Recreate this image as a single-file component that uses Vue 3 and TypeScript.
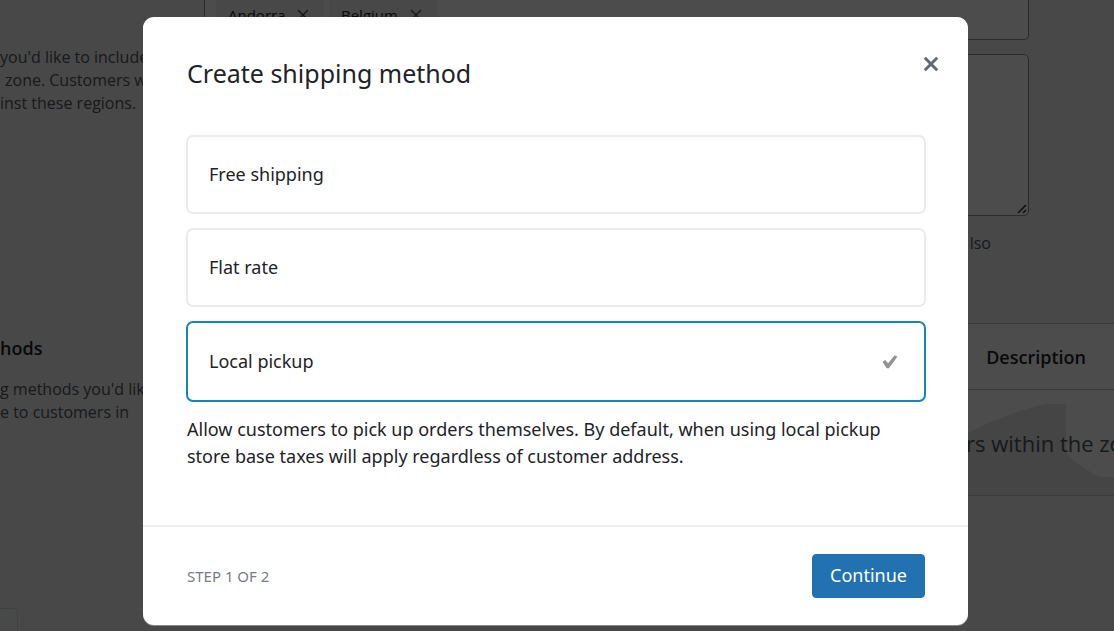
<script setup lang="ts">
import { ref, computed } from 'vue'

interface Method {
  id: string
  label: string
  description: string
}

const regions = ['Andorra', 'Belgium']

const methods: Method[] = [
  { id: 'free', label: 'Free shipping', description: '' },
  { id: 'flat', label: 'Flat rate', description: '' },
  {
    id: 'pickup',
    label: 'Local pickup',
    description:
      'Allow customers to pick up orders themselves. By default, when using local pickup store base taxes will apply regardless of customer address.',
  },
]

const selected = ref('pickup')
const description = computed(() => methods.find((m) => m.id === selected.value)?.description ?? '')
</script>

<template>
  <div class="screen">
    <main class="page" inert>
      <section class="row regions">
        <p class="help">
          you'd like to include<br />
          <span class="indent">zone. Customers will</span><br />
          inst these regions.
        </p>
        <div class="fields">
          <div class="picker">
            <span v-for="r in regions" :key="r" class="chip">
              {{ r }}
              <svg width="12" height="12" viewBox="0 0 12 12"><path d="M1 1l10 10M11 1L1 11" /></svg>
            </span>
          </div>
          <div class="codes">
            <textarea aria-label="Postcodes"></textarea>
            <svg class="grip" width="10" height="10" viewBox="0 0 10 10"><path d="M1 9L9 1M6 9L9 6" /></svg>
          </div>
          <p class="note">lso</p>
        </div>
      </section>

      <section class="row methods">
        <div>
          <h2>hods</h2>
          <p class="help">
            g methods you'd like<br />
            e to customers in
          </p>
        </div>
        <table>
          <thead>
            <tr><th scope="col">Description</th></tr>
          </thead>
          <tbody>
            <tr>
              <td>
                <svg class="art" width="146" height="105" viewBox="0 0 146 105">
                  <path d="M0 43Q46 20 78 14L98 14V58Q98 66 106 71L124 83Q129 87 135 87H146V105H0Z" />
                </svg>
                <span>rs within the zone</span>
              </td>
            </tr>
          </tbody>
        </table>
      </section>
      <button class="save" type="button" aria-label="Save"></button>
    </main>

    <div class="overlay">
      <form class="modal" role="dialog" aria-labelledby="title" @submit.prevent>
        <header>
          <h1 id="title">Create shipping method</h1>
          <button class="close" type="button" aria-label="Close">
            <svg width="16" height="16" viewBox="0 0 16 16"><path d="M1.8 1.8l12.4 12.4M14.2 1.8L1.8 14.2" /></svg>
          </button>
        </header>

        <div class="body">
          <div class="options">
            <label v-for="m in methods" :key="m.id" class="option" :class="{ active: selected === m.id }">
              <input v-model="selected" type="radio" name="method" :value="m.id" />
              <span>{{ m.label }}</span>
              <svg v-if="selected === m.id" width="16" height="14" viewBox="0 0 16 14">
                <path d="M.6 7L3.2 4.9 6.1 8.3 12.7.3 15.4 1.7 6.9 13.2H4.7Z" />
              </svg>
            </label>
          </div>
          <p class="description">{{ description }}</p>
        </div>

        <footer>
          <span class="step">STEP 1 OF 2</span>
          <button class="continue" type="submit">Continue</button>
        </footer>
      </form>
    </div>
  </div>
</template>

<style>
body {
  margin: 0;
  background: #f0f0f1;
}
</style>

<style scoped>
* {
  box-sizing: border-box;
}
h1,
h2,
p {
  margin: 0;
}
button,
textarea {
  font: inherit;
}
.screen {
  position: relative;
  height: 100vh;
  overflow: hidden;
  font-family: 'Open Sans', 'Noto Sans', sans-serif;
  color: #1d2327;
}
.page {
  height: 100%;
  background: #f0f0f1;
}
.row {
  display: grid;
  grid-template-columns: 204px 1fr;
}
.regions {
  height: 323px;
}
.help {
  font-size: 16px;
  line-height: 23px;
  color: #50575e;
  white-space: nowrap;
}
.regions .help {
  padding-top: 46px;
}
.indent {
  padding-left: 5px;
}
.fields {
  padding-right: 85px;
}
.picker {
  display: flex;
  gap: 5px;
  height: 40px;
  padding: 0 11px 10px;
  background: #fff;
  border: 1px solid #8c8f94;
  border-top: 0;
  border-radius: 0 0 5px 5px;
}
.chip {
  display: flex;
  align-items: center;
  justify-content: space-between;
  width: 108px;
  padding: 0 15px 0 12px;
  background: #f0f0f1;
  font-size: 15px;
}
.chip svg {
  fill: none;
  stroke: #50575e;
  stroke-width: 1.5;
}
.codes {
  position: relative;
  margin-top: 14px;
}
.codes textarea {
  display: block;
  width: 100%;
  height: 162px;
  background: #fff;
  border: 1px solid #8c8f94;
  border-radius: 5px;
  resize: none;
}
.grip {
  position: absolute;
  right: 2px;
  bottom: 2px;
  fill: none;
  stroke: #1d2327;
  stroke-width: 1.4;
}
.note {
  margin-top: 16px;
  padding-right: 38px;
  font-size: 16px;
  line-height: 23px;
  color: #50575e;
  text-align: right;
}
.methods h2 {
  padding-top: 12px;
  font-size: 18px;
  font-weight: 600;
  line-height: 26px;
}
.methods .help {
  padding-top: 17px;
}
table {
  width: 100%;
  table-layout: fixed;
  border-collapse: collapse;
  background: #fff;
  white-space: nowrap;
}
tr {
  border: solid #c3c4c7;
  border-width: 1px 0;
}
th {
  height: 66px;
  padding: 0 28px 0 0;
  font-size: 18px;
  font-weight: 600;
  text-align: right;
}
td {
  position: relative;
  height: 106px;
  padding: 0 0 0 762px;
  font-size: 22px;
  color: #50575e;
}
td span {
  position: relative;
}
.art {
  position: absolute;
  top: 0;
  right: 0;
  fill: #e6e6e6;
}
.save {
  display: block;
  width: 18px;
  height: 44px;
  margin-top: 112px;
  background: #f0f6f4;
  border: 1px solid #d5dddb;
  border-left: 0;
  border-radius: 0 4px 4px 0;
}
.overlay {
  position: absolute;
  inset: 0;
  padding: 17px 146px 5px 143px;
  background: rgba(0, 0, 0, 0.7);
}
.modal {
  background: #fff;
  border-radius: 11px;
  box-shadow: 0 1px 0 #888;
  font-family: 'Noto Sans', 'Open Sans', sans-serif;
}
header {
  display: flex;
  align-items: center;
  justify-content: space-between;
  padding: 37px 29px 43px 44px;
}
h1 {
  font-size: 25px;
  font-weight: 400;
  line-height: 38px;
}
.close {
  display: flex;
  padding: 0;
  margin-bottom: 18px;
  background: none;
  border: 0;
}
.close svg {
  fill: none;
  stroke: #646970;
  stroke-width: 3;
}
.body {
  padding: 0 42px 55px 43px;
}
.options {
  display: grid;
  gap: 14px;
}
.option {
  display: flex;
  align-items: center;
  justify-content: space-between;
  height: 79px;
  padding: 0 26px 2px 21px;
  border: 2px solid #ebebeb;
  border-radius: 7px;
  font-size: 18px;
}
.option.active {
  height: 81px;
  border-color: #1585be;
}
.option input {
  position: absolute;
  opacity: 0;
  pointer-events: none;
}
.option svg {
  margin-top: 2px;
  fill: #949494;
}
.description {
  padding: 14px 14px 0 1px;
  font-size: 18px;
  line-height: 27px;
}
footer {
  display: flex;
  align-items: center;
  justify-content: space-between;
  padding: 27px 43px 27px 44px;
  border-top: 2px solid #eee;
}
.step {
  font-size: 15px;
  color: #787c82;
}
.continue {
  height: 44px;
  padding: 0 17px 2px;
  background: #2271b1;
  border: 1px solid #2271b1;
  border-radius: 4px;
  color: #fff;
  font-size: 18px;
}
</style>
